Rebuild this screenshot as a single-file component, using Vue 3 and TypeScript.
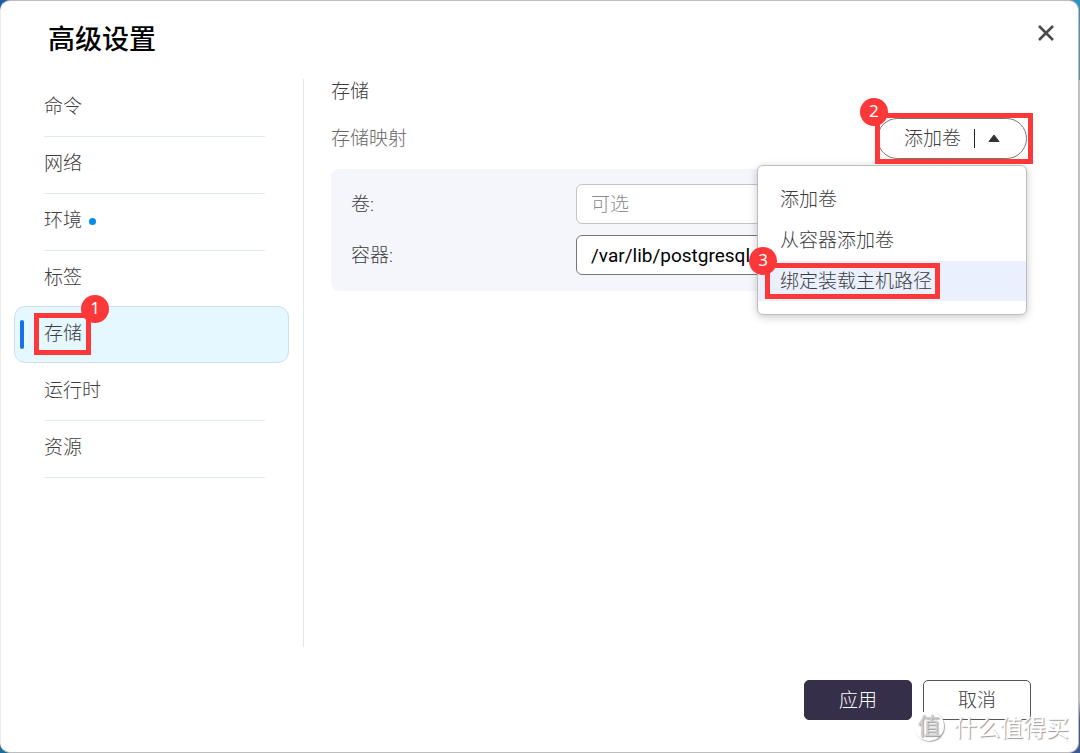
<script setup lang="ts">
import { ref } from 'vue'

interface NavItem {
  id: string
  label: string
  changed?: boolean
  mark?: number
}

interface MenuEntry {
  label: string
  mark?: number
}

const navItems: NavItem[] = [
  { id: 'command', label: '命令' },
  { id: 'network', label: '网络' },
  { id: 'env', label: '环境', changed: true },
  { id: 'labels', label: '标签' },
  { id: 'storage', label: '存储', mark: 1 },
  { id: 'runtime', label: '运行时' },
  { id: 'resources', label: '资源' },
]

const menuEntries: MenuEntry[] = [
  { label: '添加卷' },
  { label: '从容器添加卷' },
  { label: '绑定装载主机路径', mark: 3 },
]

const active = ref('storage')
const menuOpen = ref(true)
const volume = ref('')
const containerPath = ref('/var/lib/postgresql/data')
</script>

<template>
  <div class="desktop">
    <section class="dialog" role="dialog" aria-labelledby="dialog-title">
      <header class="head">
        <h1 id="dialog-title">高级设置</h1>
        <button class="close" type="button" aria-label="关闭">
          <svg viewBox="0 0 18 18" width="18" height="18">
            <path d="M2 2 L16 16 M16 2 L2 16" />
          </svg>
        </button>
      </header>

      <div class="body">
        <nav class="side">
          <button
            v-for="item in navItems"
            :key="item.id"
            type="button"
            class="nav-item"
            :class="{ active: item.id === active }"
            @click="active = item.id"
          >
            <span class="nav-line">
              <span class="nav-label">
                {{ item.label }}
                <span v-if="item.mark" class="callout callout-nav"><b>{{ item.mark }}</b></span>
              </span>
              <i v-if="item.changed" class="dot"></i>
            </span>
          </button>
        </nav>

        <main class="content">
          <h2>存储</h2>
          <div class="mapping-head">
            <h3>存储映射</h3>
            <div class="adder">
              <button class="add" type="button" :aria-expanded="menuOpen" @click="menuOpen = !menuOpen">
                <span>添加卷</span>
                <i class="bar"></i>
                <svg viewBox="0 0 12 9" width="12" height="9">
                  <path d="M6 1 L11 7.5 H1 Z" />
                </svg>
              </button>
              <span class="callout callout-add"><b>2</b></span>
              <ul v-if="menuOpen" class="menu">
                <li v-for="entry in menuEntries" :key="entry.label">
                  <button type="button" :class="{ hovered: entry.mark }">
                    <span class="menu-label">
                      {{ entry.label }}
                      <span v-if="entry.mark" class="callout callout-menu"><b>{{ entry.mark }}</b></span>
                    </span>
                  </button>
                </li>
              </ul>
            </div>
          </div>

          <form class="panel" @submit.prevent>
            <label for="volume">卷:</label>
            <input id="volume" v-model="volume" type="text" placeholder="可选" />
            <label for="container">容器:</label>
            <input id="container" v-model="containerPath" class="filled" type="text" />
          </form>
        </main>
      </div>

      <footer class="foot">
        <button type="button" class="primary">应用</button>
        <button type="button" class="secondary">取消</button>
      </footer>
    </section>

    <div class="watermark">
      <span class="seal">值</span>
      <span>什么值得买</span>
    </div>
  </div>
</template>

<style>
body {
  margin: 0;
}
</style>

<style scoped>
.desktop {
  position: relative;
  box-sizing: border-box;
  min-height: 100vh;
  display: flex;
  padding-right: 1px;
  background:
    linear-gradient(180deg, #2f92c4 0 10px, #5290a6 30px 80px, #c3c3c3 80px 700px, #3a5a94 720px) right / 50% 100% no-repeat,
    linear-gradient(180deg, #1f5ca6, #1d6c9c);
  font-family: Roboto, "Noto Sans CJK SC", sans-serif;
  font-size: 19px;
  line-height: 24px;
  font-weight: 300;
  color: #3c3c3c;
}

.dialog {
  flex: 1;
  box-sizing: border-box;
  display: flex;
  flex-direction: column;
  border: 1px solid #bdbdbd;
  border-left-color: #ececec;
  border-radius: 10px;
  background: #fff;
}

button {
  font: inherit;
  color: inherit;
  margin: 0;
  padding: 0;
  border: 0;
  background: none;
  cursor: pointer;
}

.head {
  display: flex;
  justify-content: space-between;
  align-items: center;
  height: 78px;
  box-sizing: border-box;
  padding: 0 23px 0 47px;
}

h1 {
  margin: 0;
  font-size: 27px;
  line-height: 36px;
  font-weight: 500;
  color: #000;
}

.close {
  display: flex;
  margin-bottom: 14px;
}

.close path {
  fill: none;
  stroke: #4a4a4a;
  stroke-width: 2.6;
}

.body {
  flex: 1;
  display: flex;
}

.side {
  flex: none;
  width: 275px;
  padding: 0 14px 0 13px;
  border-right: 1px solid #dfe6ec;
}

.nav-item {
  position: relative;
  box-sizing: border-box;
  display: block;
  width: 100%;
  height: 57px;
  padding: 0 23px 0 29px;
  border: 1px solid transparent;
  border-width: 1px 1px 0;
  text-align: left;
}

.nav-line {
  box-sizing: border-box;
  display: flex;
  align-items: center;
  gap: 7px;
  height: 57px;
  padding-bottom: 2px;
  border-bottom: 1px solid #dfebf3;
}

.nav-item:has(+ .active) .nav-line,
.active .nav-line {
  border-bottom-color: transparent;
}

.nav-item.active {
  margin-top: -1px;
  border: 1px solid #cfdfe9;
  border-radius: 11px;
  background: #e5f7ff;
}

.nav-item.active::before {
  content: "";
  position: absolute;
  left: 5px;
  top: 13px;
  width: 4px;
  height: 29px;
  border-radius: 2px;
  background: #1473e6;
}

.nav-label,
.menu-label {
  position: relative;
}

.dot {
  width: 7px;
  height: 7px;
  border-radius: 50%;
  background: #0090ec;
}

.content {
  flex: 1;
  min-width: 0;
  padding: 1px 51px 0 27px;
}

h2,
h3 {
  margin: 0;
  font-size: 19px;
  line-height: 24px;
  font-weight: 300;
}

h3 {
  color: #666;
}

.mapping-head {
  display: flex;
  justify-content: space-between;
  align-items: center;
  margin-top: 14px;
}

.adder {
  position: relative;
}

.add {
  box-sizing: border-box;
  display: flex;
  align-items: center;
  gap: 13px;
  height: 41px;
  padding: 0 26px;
  border: 1px solid #777;
  border-radius: 21px;
}

.bar {
  width: 1px;
  height: 19px;
  background: #222;
}

.add svg path {
  fill: #333;
  stroke: #333;
  stroke-linejoin: round;
}

.menu {
  position: absolute;
  z-index: 1;
  top: 47px;
  right: 0;
  box-sizing: border-box;
  width: 270px;
  margin: 0;
  padding: 13px 0;
  display: grid;
  gap: 1px;
  list-style: none;
  border: 1px solid #bdbdbd;
  border-radius: 6px;
  background: #fff;
  box-shadow: 0 2px 8px rgba(0, 0, 0, 0.22);
}

.menu button {
  display: block;
  width: 100%;
  height: 40px;
  padding: 2px 22px 0;
  text-align: left;
}

.menu .hovered {
  background: #eaf0fe;
}

.panel {
  display: grid;
  grid-template-columns: 225px 1fr;
  align-items: center;
  row-gap: 11px;
  margin-top: 10px;
  padding: 15px 20px 16px;
  border-radius: 8px;
  background: #f5f6fb;
}

.panel label {
  padding-top: 2px;
}

.panel input {
  box-sizing: border-box;
  width: 100%;
  height: 40px;
  padding: 0 14px;
  border: 1px solid #c4c4c4;
  border-radius: 6px;
  background: #fff;
  font: inherit;
  color: #000;
}

.panel .filled {
  border-color: #777;
  font-weight: 400;
}

.panel input::placeholder {
  color: #8b8b8b;
  opacity: 1;
}

.foot {
  display: flex;
  justify-content: flex-end;
  gap: 11px;
  padding: 33px 47px 32px;
}

.foot button {
  box-sizing: border-box;
  width: 108px;
  height: 40px;
  padding-top: 2px;
  border: 1px solid #555;
  border-radius: 5px;
}

.foot .primary {
  border-color: #352f49;
  background: #352f49;
  color: #fff;
}

/* Numbered step callouts */
.callout {
  position: absolute;
  z-index: 2;
  border: 5px solid #fc3838;
  pointer-events: none;
}

.callout b {
  position: absolute;
  width: 28px;
  height: 28px;
  border-radius: 50%;
  background: #fc3838;
  color: #fff;
  font-family: "Noto Sans", sans-serif;
  font-size: 17px;
  line-height: 26px;
  font-weight: 400;
  text-align: center;
}

.callout-nav {
  inset: -9px -9px -9px -10px;
}

.callout-nav b {
  top: -23px;
  right: -23px;
}

.callout-add {
  inset: -5px -6px -5px -2px;
}

.callout-add b {
  top: -20px;
  left: -20px;
}

.callout-menu {
  inset: -7px -8px -6px -15px;
}

.callout-menu b {
  top: -21px;
  left: -21px;
}

.watermark {
  position: absolute;
  z-index: 3;
  right: 11px;
  bottom: 11px;
  display: flex;
  align-items: center;
  gap: 10px;
  font-family: "Noto Sans CJK SC", sans-serif;
  font-size: 23px;
  line-height: 32px;
  font-weight: 400;
  color: #fff;
  text-shadow: 1px 1px 1px #999;
  pointer-events: none;
}

.seal {
  box-sizing: border-box;
  width: 30px;
  height: 30px;
  border-radius: 50%;
  box-shadow: 1px 1px 1px #aaa;
  background: #fff;
  color: #d0d0d0;
  line-height: 27px;
  text-align: center;
}
</style>
